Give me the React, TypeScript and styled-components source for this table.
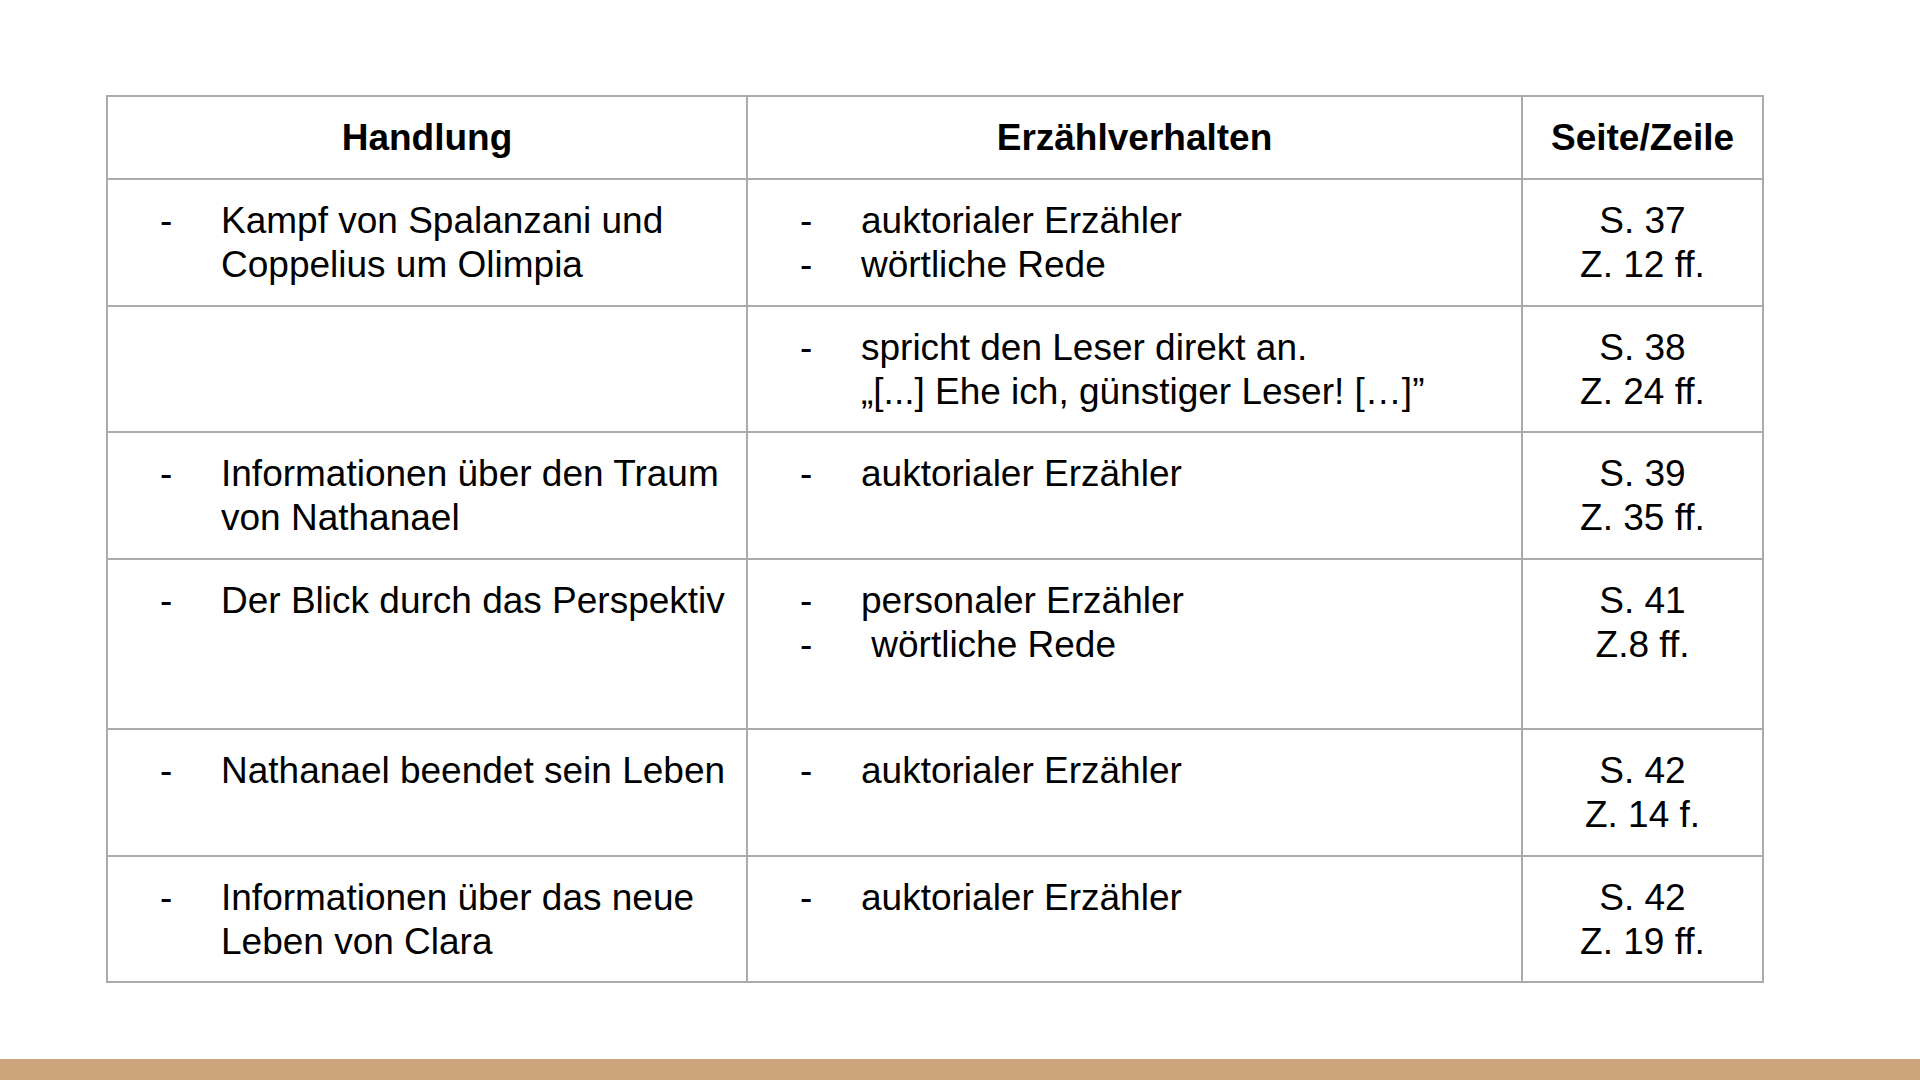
import { FC } from 'react';
import styled, { createGlobalStyle } from 'styled-components';

const GlobalStyle = createGlobalStyle`
  html, body {
    margin: 0;
    padding: 0;
    background: #fff;
  }
  body {
    font-family: 'Liberation Sans', Arial, sans-serif;
  }
`;

const Slide = styled.div`
  width: 1920px;
  height: 1080px;
  display: flex;
  flex-direction: column;
  background: #fff;
  overflow: hidden;
`;

const Content = styled.main`
  flex: 1;
  padding: 95px 0 0 106px;
`;

const Footer = styled.div`
  height: 21px;
  background: #cba47b;
`;

const Table = styled.table`
  border-collapse: collapse;
  table-layout: fixed;
  width: 1658px;
  color: #000;
  font-size: 37px;
  line-height: 44px;
`;

const HeadCell = styled.th`
  border: 2px solid #ababab;
  height: 81px;
  padding: 0;
  font-weight: bold;
  text-align: center;
  vertical-align: middle;
`;

const Cell = styled.td<{ $center?: boolean; $tall?: boolean }>`
  border: 2px solid #ababab;
  padding: 19px 10px 17.5px ${(p) => (p.$center ? '10px' : '52px')};
  height: ${(p) => (p.$tall ? '132px' : '88px')};
  vertical-align: top;
  text-align: ${(p) => (p.$center ? 'center' : 'left')};
  white-space: nowrap;
`;

const Item = styled.div`
  display: flex;
`;

const Dash = styled.span`
  flex: none;
  width: 61px;
`;

const Line = styled.div``;

type Row = {
  plot: string[][];
  narr: string[][];
  ref: string[];
  tall?: boolean;
};

const rows: Row[] = [
  {
    plot: [['Kampf von Spalanzani und', 'Coppelius um Olimpia']],
    narr: [['auktorialer Erzähler'], ['wörtliche Rede']],
    ref: ['S. 37', 'Z. 12 ff.'],
  },
  {
    plot: [],
    narr: [['spricht den Leser direkt an.', '„[...] Ehe ich, günstiger Leser! […]”']],
    ref: ['S. 38', 'Z. 24 ff.'],
  },
  {
    plot: [['Informationen über den Traum', 'von Nathanael']],
    narr: [['auktorialer Erzähler']],
    ref: ['S. 39', 'Z. 35 ff.'],
  },
  {
    plot: [['Der Blick durch das Perspektiv']],
    narr: [['personaler Erzähler'], ['\u00a0wörtliche Rede']],
    ref: ['S. 41', 'Z.8 ff.'],
    tall: true,
  },
  {
    plot: [['Nathanael beendet sein Leben']],
    narr: [['auktorialer Erzähler']],
    ref: ['S. 42', 'Z. 14 f.'],
  },
  {
    plot: [['Informationen über das neue', 'Leben von Clara']],
    narr: [['auktorialer Erzähler']],
    ref: ['S. 42', 'Z. 19 ff.'],
  },
];

const Bullets: FC<{ items: string[][] }> = ({ items }) => (
  <>
    {items.map((lines, i) => (
      <Item key={i}>
        <Dash>-</Dash>
        <div>
          {lines.map((l, j) => (
            <Line key={j}>{l}</Line>
          ))}
        </div>
      </Item>
    ))}
  </>
);

export default function App() {
  return (
    <Slide>
      <GlobalStyle />
      <Content>
        <Table>
          <colgroup>
            <col style={{ width: 640 }} />
            <col style={{ width: 775 }} />
            <col style={{ width: 241 }} />
          </colgroup>
          <thead>
            <tr>
              <HeadCell>Handlung</HeadCell>
              <HeadCell>Erzählverhalten</HeadCell>
              <HeadCell>Seite/Zeile</HeadCell>
            </tr>
          </thead>
          <tbody>
            {rows.map((r, i) => (
              <tr key={i}>
                <Cell $tall={r.tall}>
                  <Bullets items={r.plot} />
                </Cell>
                <Cell $tall={r.tall}>
                  <Bullets items={r.narr} />
                </Cell>
                <Cell $center $tall={r.tall}>
                  {r.ref.map((l, j) => (
                    <Line key={j}>{l}</Line>
                  ))}
                </Cell>
              </tr>
            ))}
          </tbody>
        </Table>
      </Content>
      <Footer />
    </Slide>
  );
}
